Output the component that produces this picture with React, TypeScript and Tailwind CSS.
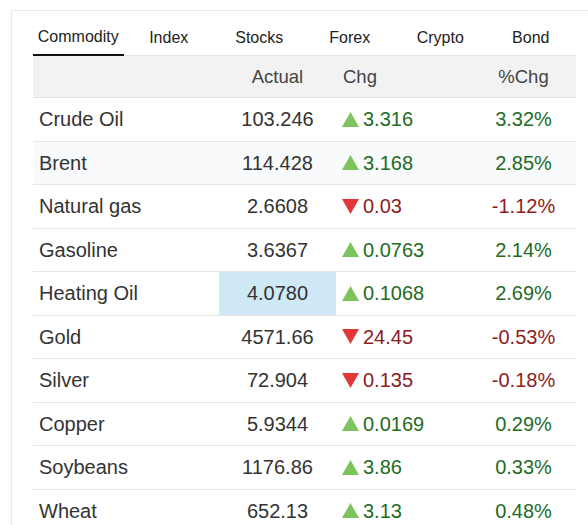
const tabs = ['Commodity', 'Index', 'Stocks', 'Forex', 'Crypto', 'Bond'];

type Row = {
  name: string;
  actual: string;
  chg: string;
  pct: string;
  up: boolean;
  hot?: boolean;
  shade?: boolean;
};

const rows: Row[] = [
  { name: 'Crude Oil', actual: '103.246', chg: '3.316', pct: '3.32%', up: true },
  { name: 'Brent', actual: '114.428', chg: '3.168', pct: '2.85%', up: true, shade: true },
  { name: 'Natural gas', actual: '2.6608', chg: '0.03', pct: '-1.12%', up: false },
  { name: 'Gasoline', actual: '3.6367', chg: '0.0763', pct: '2.14%', up: true },
  { name: 'Heating Oil', actual: '4.0780', chg: '0.1068', pct: '2.69%', up: true, hot: true },
  { name: 'Gold', actual: '4571.66', chg: '24.45', pct: '-0.53%', up: false },
  { name: 'Silver', actual: '72.904', chg: '0.135', pct: '-0.18%', up: false },
  { name: 'Copper', actual: '5.9344', chg: '0.0169', pct: '0.29%', up: true },
  { name: 'Soybeans', actual: '1176.86', chg: '3.86', pct: '0.33%', up: true },
  { name: 'Wheat', actual: '652.13', chg: '3.13', pct: '0.48%', up: true },
];

const Arrow = ({ up }: { up: boolean }) => (
  <svg width="17" height="15" viewBox="0 0 17 15" className="shrink-0">
    {up ? (
      <polygon points="8.5,0 17,15 0,15" fill="#7cc35b" />
    ) : (
      <polygon points="0,0 17,0 8.5,15" fill="#e3383a" />
    )}
  </svg>
);

export default function App() {
  return (
    <div className="min-h-screen bg-white font-['Liberation_Sans',Arial,sans-serif] text-[#333]">
      <div className="ml-[11px] mt-[10px] border-l border-t border-[#e8e8e8] pl-[21px] pr-[12px]">
        <div className="flex h-[45px] border-b border-[#e3e3e3]">
          {tabs.map((t, i) => (
            <div
              key={t}
              className={`flex flex-1 items-center justify-center pt-[9px] text-[16px] text-[#222] ${
                i === 0 ? 'border-b-2 border-[#111] -mb-px' : ''
              }`}
            >
              {t}
            </div>
          ))}
        </div>
        <div className="flex h-[42px] items-center bg-[#f2f2f2] text-[18.5px] text-[#444] border-b border-[#e3e3e3]">
          <div className="w-[186px]" />
          <div className="w-[117px] text-center">Actual</div>
          <div className="w-[135px] pl-[7px]">Chg</div>
          <div className="flex-1 text-center">%Chg</div>
        </div>
        {rows.map((r) => (
          <div
            key={r.name}
            className={`flex h-[43.5px] border-b border-[#e6e6e6] text-[20px] ${
              r.shade ? 'bg-[#f9fafb]' : 'bg-white'
            }`}
          >
            <div className="flex w-[186px] items-center pl-[6px]">{r.name}</div>
            <div
              className={`flex w-[117px] items-center justify-center ${
                r.hot ? 'bg-[#cfe8f6]' : ''
              }`}
            >
              {r.actual}
            </div>
            <div
              className={`flex w-[135px] items-center gap-[4px] pl-[6px] ${
                r.up ? 'text-[#236b23]' : 'text-[#8b1c1f]'
              }`}
            >
              <Arrow up={r.up} />
              <span>{r.chg}</span>
            </div>
            <div
              className={`flex flex-1 items-center justify-center ${
                r.up ? 'text-[#236b23]' : 'text-[#8b1c1f]'
              }`}
            >
              {r.pct}
            </div>
          </div>
        ))}
      </div>
    </div>
  );
}
